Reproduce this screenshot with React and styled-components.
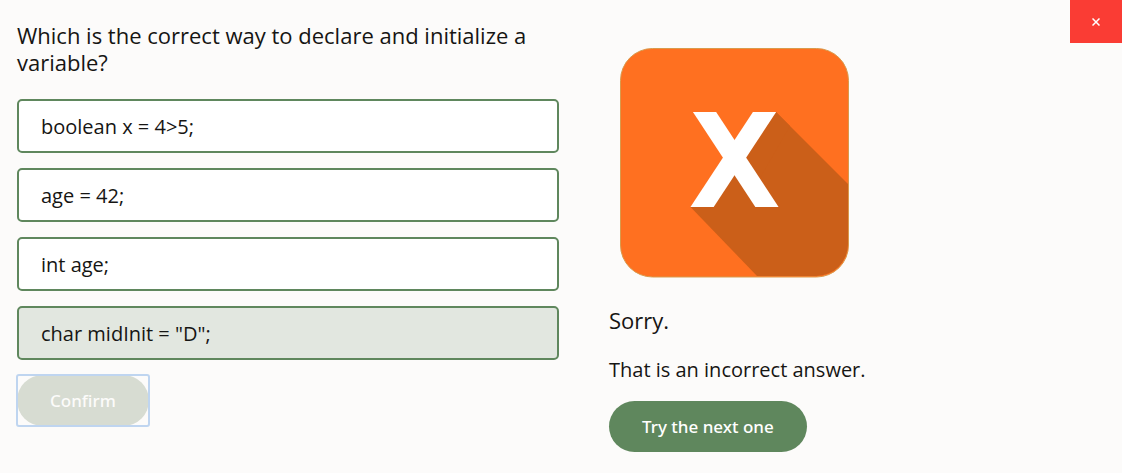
import React, { useState } from "react";
import styled, { createGlobalStyle } from "styled-components";

const GlobalStyle = createGlobalStyle`
  *, *::before, *::after { box-sizing: border-box; }
  body {
    margin: 0;
    background: #fcfbfa;
    color: #161513;
    font-family: "Open Sans", "Noto Sans", sans-serif;
  }
  button { font-family: inherit; cursor: pointer; }
`;

const Quiz = styled.main`
  position: relative;
  display: grid;
  grid-template-columns: 1fr 1fr;
  gap: 4px;
  padding: 22px 17px;
`;

const Question = styled.section`
  min-width: 0;
`;

const Prompt = styled.h1`
  margin: 0 0 23px;
  font-size: 22px;
  font-weight: 400;
  line-height: 27px;
`;

const Answers = styled.div`
  display: flex;
  flex-direction: column;
  gap: 15px;
  margin-bottom: 15px;
`;

const Answer = styled.button`
  min-height: 54px;
  padding: 12px 22px 10px;
  border: 2px solid #5f875d;
  border-radius: 5px;
  background: ${({ $selected }) => ($selected ? "#e2e7e0" : "#fff")};
  color: #161513;
  font-size: 20px;
  line-height: 24px;
  text-align: left;
`;

const PillButton = styled.button`
  padding: 13px 33px;
  border: 0;
  border-radius: 26px;
  background: #5f875d;
  color: #fff;
  font-family: "Noto Sans", sans-serif;
  font-size: 17px;
  font-weight: 500;
  line-height: 25px;
`;

const ConfirmButton = styled(PillButton)`
  display: block;
  background: #d7dcd2;
  color: #fcfbfa;
`;

const FocusFrame = styled.div`
  width: fit-content;
  border-radius: 2px;
  outline: 2px solid #bfd5f0;
  outline-offset: -1px;
`;

const Feedback = styled.section`
  min-width: 0;
  padding: 26px 0 0 46px;
`;

const ResultIcon = styled.svg`
  display: block;
  width: 230px;
  height: 230px;
  margin: 0 0 29px 11px;
`;

const Verdict = styled.h2`
  margin: 0 0 23px;
  font-size: 22px;
  font-weight: 400;
  line-height: 27px;
`;

const Message = styled.p`
  margin: 0 0 18px;
  font-size: 20px;
  line-height: 26px;
`;

const CloseButton = styled.button`
  position: absolute;
  top: 0;
  right: 0;
  display: grid;
  place-items: center;
  width: 52px;
  height: 43px;
  padding: 0;
  border: 0;
  background: #fa3c34;
`;

const answers = ["boolean x = 4>5;", "age = 42;", "int age;", 'char midInit = "D";'];

function IncorrectIcon() {
  return (
    <ResultIcon viewBox="0 0 230 230" role="img" aria-label="Incorrect">
      <defs>
        <clipPath id="tile"><rect x="1" y="1" width="227" height="227" rx="32" /></clipPath>
        <clipPath id="band"><rect x="60" y="64" width="110" height="95" /></clipPath>
      </defs>
      <rect x="0.5" y="0.5" width="228" height="228.5" rx="32" fill="#ff7020" stroke="#d99a4c" />
      <path d="M156 64 L230 138 V229 H138 L70.5 159 L114 110 Z" fill="#cb5f19" clipPath="url(#tile)" />
      <path d="M133 64 H156 L126 110 L114 94 Z" fill="#ff7020" />
      <path d="M156 64 L126 109 L140 130 L170 78 Z" fill="#cb5f19" />
      <g clipPath="url(#band)" stroke="#fff" strokeWidth="19.4">
        <line x1="78.3" y1="54.5" x2="153.2" y2="168.5" />
        <line x1="150.8" y1="54.5" x2="75.8" y2="168.5" />
      </g>
    </ResultIcon>
  );
}

export default function App() {
  const [selected, setSelected] = useState(3);
  return (
    <>
      <GlobalStyle />
      <Quiz>
        <Question>
          <Prompt id="prompt">Which is the correct way to declare and initialize a variable?</Prompt>
          <Answers role="group" aria-labelledby="prompt">
            {answers.map((text, i) => (
              <Answer
                key={text}
                type="button"
                $selected={selected === i}
                aria-pressed={selected === i}
                onClick={() => setSelected(i)}
              >
                {text}
              </Answer>
            ))}
          </Answers>
          <FocusFrame>
            <ConfirmButton type="button">Confirm</ConfirmButton>
          </FocusFrame>
        </Question>
        <Feedback>
          <IncorrectIcon />
          <Verdict>Sorry.</Verdict>
          <Message>That is an incorrect answer.</Message>
          <PillButton type="button">Try the next one</PillButton>
        </Feedback>
        <CloseButton type="button" aria-label="Close">
          <svg width="8" height="8" viewBox="0 0 8 8" stroke="#fff" strokeWidth="1.5" aria-hidden="true">
            <path d="M0.5 0.5 L7.5 7.5 M7.5 0.5 L0.5 7.5" />
          </svg>
        </CloseButton>
      </Quiz>
    </>
  );
}
